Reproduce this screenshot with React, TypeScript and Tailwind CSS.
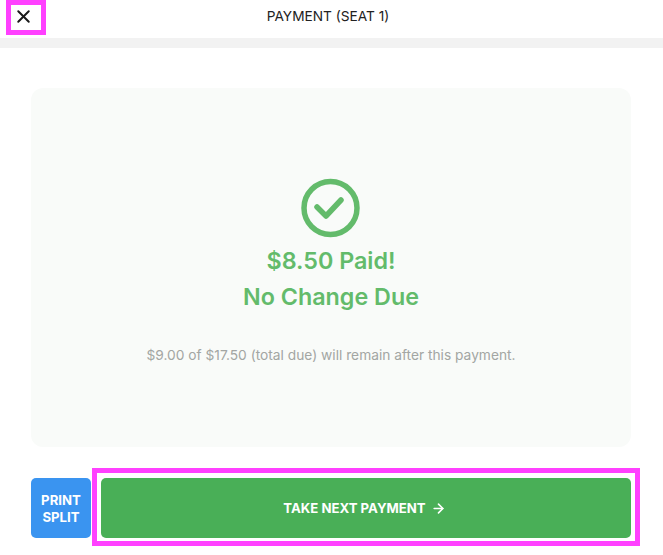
import { ArrowRight, X } from "lucide-react";

export default function App() {
  return (
    <div className="flex h-[555px] w-[663px] flex-col overflow-hidden bg-white font-['Inter',sans-serif]">
      <header className="relative flex h-[38px] shrink-0 items-center justify-center pb-[5px] pr-[7px]">
        <button className="absolute left-[6px] top-0 flex h-[35px] w-[40px] items-center justify-center border-[5px] border-[#ff40ff] pb-[3px] pr-[6px]">
          <X size={21} strokeWidth={2.25} className="text-[#1a1a1a]" />
        </button>
        <h1 className="text-[13.7px] font-normal text-[#222]">PAYMENT (SEAT 1)</h1>
      </header>
      <div className="h-[10px] shrink-0 bg-[#f2f2f2]" />
      <main className="flex flex-1 flex-col pl-[31px] pr-[32px] pt-[40px]">
        <section className="flex h-[359px] flex-col items-center rounded-[12px] bg-[#f9fbf9] pt-[90px]">
          <svg width="60" height="60" viewBox="0 0 60 60" fill="none" className="mb-[5px]">
            <circle cx="29.5" cy="30" r="26.5" stroke="#63bb6b" strokeWidth="5.5" />
            <path d="M16 29 L25 38 L40 22" stroke="#63bb6b" strokeWidth="5.5" strokeLinecap="round" strokeLinejoin="round" />
          </svg>
          <p className="text-[23.3px] font-semibold leading-[36px] text-[#63bb6b]">$8.50 Paid!</p>
          <p className="text-[23.3px] font-semibold leading-[36px] text-[#63bb6b]">No Change Due</p>
          <p className="mt-[30px] text-[13.75px] leading-[20px] text-[#a3a6a3]">$9.00 of $17.50 (total due) will remain after this payment.</p>
        </section>
        <div className="mt-[31px] flex h-[60px] gap-[10px]">
          <button className="h-full w-[60px] rounded-[5px] bg-[#3a94f0] pt-[2px] text-[13.2px] font-bold leading-[17px] text-white">
            PRINT<br />SPLIT
          </button>
          <div className="relative flex-1">
            <button className="flex h-full w-full items-center justify-center gap-[5px] rounded-[5px] bg-[#49af57] pr-[3px] pt-[1px] text-[13.2px] font-bold text-white">
              TAKE NEXT PAYMENT
              <ArrowRight size={15} strokeWidth={2.5} />
            </button>
            <div className="pointer-events-none absolute -bottom-[8px] -left-[9px] -right-[9px] -top-[10px] border-[5px] border-[#ff40ff]" />
          </div>
        </div>
      </main>
    </div>
  );
}
